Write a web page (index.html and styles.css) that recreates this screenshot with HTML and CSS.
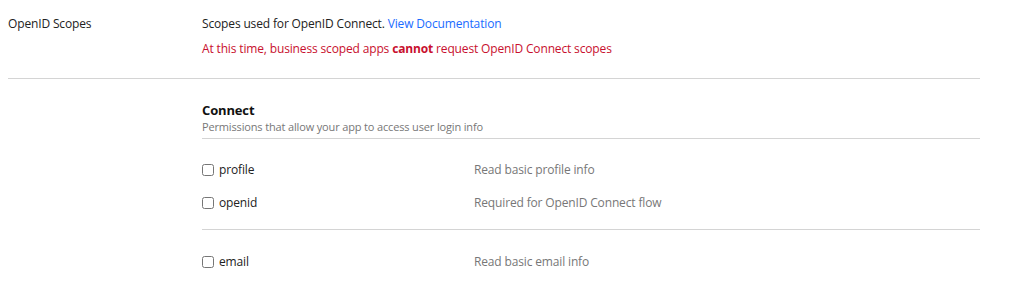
FILE: index.html
```html
<!DOCTYPE html>
<html lang="en">
<head>
  <meta charset="UTF-8" />
  <title>OpenID Scopes</title>
  <link rel="stylesheet" href="styles.css">
</head>
<body>
  <div class="settings">
    <div class="field">
      <div class="field-label">OpenID Scopes</div>
      <div class="field-body">
        <p class="help">Scopes used for OpenID Connect. <a href="#">View Documentation</a></p>
        <p class="warning">At this time, business scoped apps <strong>cannot</strong> request OpenID Connect scopes</p>
      </div>
    </div>

    <div class="scopes">
      <div class="group-head">
        <h3>Connect</h3>
        <p>Permissions that allow your app to access user login info</p>
      </div>
      <div class="scope-list">
        <label class="scope"><span class="scope-name"><input type="checkbox"> profile</span><span class="scope-desc">Read basic profile info</span></label>
        <label class="scope"><span class="scope-name"><input type="checkbox"> openid</span><span class="scope-desc">Required for OpenID Connect flow</span></label>
      </div>
      <div class="scope-list split">
        <label class="scope"><span class="scope-name"><input type="checkbox"> email</span><span class="scope-desc">Read basic email info</span></label>
      </div>
    </div>
  </div>
</body>
</html>
```

FILE: styles.css
```css
body {
  font-family: 'Open Sans', sans-serif;
  font-size: 12px;
  letter-spacing: -0.15px;
  color: #222;
  background: #fff;
  margin: 0;
}
.settings {
  width: 972px;
  margin-left: 8px;
}
.field {
  display: flex;
  padding-top: 15px;
  padding-bottom: 13px;
  border-bottom: 1px solid #d4d4d4;
}
.field-label {
  width: 194px;
  flex-shrink: 0;
  line-height: 17px;
}
.field-body p {
  margin: 0 0 8px;
  line-height: 17px;
}
.field-body a {
  color: #1a6bff;
  text-decoration: none;
}
.warning {
  color: #c8102e;
}
.scopes {
  margin-left: 194px;
  padding-top: 22px;
}
.group-head {
  border-bottom: 1px solid #d4d4d4;
  padding-bottom: 4px;
}
.group-head h3 {
  margin: 0;
  font-size: 13px;
  font-weight: 700;
  line-height: 18px;
  color: #111;
}
.group-head p {
  margin: 0;
  font-size: 11px;
  line-height: 15px;
  color: #777;
}
.scope-list {
  padding: 22px 0 18px;
}
.scope-list.split {
  border-top: 1px solid #d4d4d4;
  padding-top: 23px;
}
.scope {
  display: flex;
  line-height: 17px;
  margin-bottom: 16px;
}
.scope:last-child {
  margin-bottom: 0;
}
.scope-name {
  width: 272px;
  display: flex;
  align-items: center;
  gap: 5px;
}
.scope-name input {
  margin: 0;
  width: 12px;
  height: 12px;
}
.scope-desc {
  color: #777;
}
```
